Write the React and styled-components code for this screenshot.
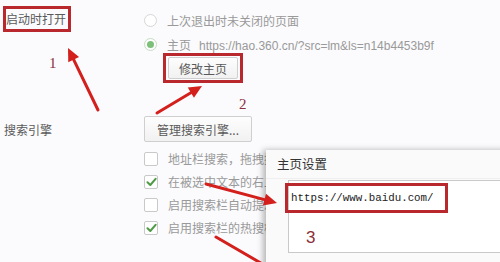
import React from 'react';
import styled, { createGlobalStyle } from 'styled-components';

const GlobalStyle = createGlobalStyle`
  html, body {
    margin: 0;
    padding: 0;
    background: #fbfbfd;
  }
  body {
    font-family: "Noto Sans CJK SC", "Noto Sans", sans-serif;
  }
`;

const Page = styled.div`
  position: relative;
  width: 500px;
  height: 262px;
  overflow: hidden;
  background: #fbfbfd;
`;

const Section = styled.div`
  display: flex;
  margin-top: ${p => p.top || 0}px;
`;

const LabelCell = styled.div`
  width: ${p => p.boxed ? 141 : 140}px;
  padding-left: ${p => p.boxed ? 3 : 4}px;
  flex-shrink: 0;
`;

const Label = styled.div`
  display: inline-block;
  font-size: 12px;
  color: #5a5a5a;
  line-height: ${p => p.boxed ? 20 : 26}px;
  height: ${p => p.boxed ? 20 : 26}px;
  padding-right: ${p => p.boxed ? 2 : 0}px;
  border: ${p => p.boxed ? '3px solid #b8282c' : 'none'};
  margin-top: ${p => p.boxed ? 6 : 0}px;
  white-space: nowrap;
`;

const Options = styled.div`
  display: flex;
  flex-direction: column;
  padding-top: ${p => p.top || 0}px;
  min-width: 0;
`;

const Row = styled.div`
  display: flex;
  align-items: center;
  height: ${p => p.h || 24}px;
  gap: 10px;
  white-space: nowrap;
  font-size: 12px;
  color: #999;
`;

const Clipped = styled.span`
  display: block;
  width: 98px;
  overflow: hidden;
`;

const Radio = styled.span`
  box-sizing: border-box;
  width: 13px;
  height: 13px;
  border-radius: 50%;
  border: 1px solid ${p => p.checked ? '#c5dcc4' : '#d6d6d6'};
  background: #fff;
  display: flex;
  align-items: center;
  justify-content: center;
  &::after {
    content: '';
    width: 7px;
    height: 7px;
    border-radius: 50%;
    background: ${p => p.checked ? '#7cc07a' : 'transparent'};
  }
`;

const Url = styled.span`
  margin-left: 8px;
  font-family: "Liberation Sans", Arial, sans-serif;
  font-size: 12px;
  color: #999;
`;

const RedBox = styled.div`
  box-sizing: border-box;
  border: 3px solid #b8282c;
  padding: 1px 2px;
`;

const ButtonBox = styled(RedBox)`
  width: 80px;
  height: 30px;
  margin: -3px 0 0 19px;
`;

const Button = styled.div`
  box-sizing: border-box;
  height: ${p => p.h || 22}px;
  width: ${p => p.w ? p.w + 'px' : '100%'};
  border: 1px solid #cfcfcf;
  border-radius: 2px;
  background: linear-gradient(#fdfdfd, #f1f1f1);
  font-size: 12px;
  color: #5a5a5a;
  display: flex;
  align-items: center;
  justify-content: center;
  white-space: nowrap;
`;

const CheckList = styled.div`
  margin-top: 5px;
  display: flex;
  flex-direction: column;
`;

const Checkbox = styled.span`
  box-sizing: border-box;
  width: 14px;
  height: 14px;
  border: 1px solid #c9c9c9;
  border-radius: 2px;
  background: #fff;
  display: flex;
  align-items: center;
  justify-content: center;
  color: #4f9a45;
  flex-shrink: 0;
`;

const Dialog = styled.div`
  position: absolute;
  left: 266px;
  top: 150px;
  width: 260px;
  height: 130px;
  background: #fafafa;
  box-shadow: -3px 0 6px rgba(0, 0, 0, 0.28);
  display: flex;
  flex-direction: column;
`;

const DialogTitle = styled.div`
  height: 28px;
  line-height: 27px;
  padding-left: 11px;
  font-size: 12.5px;
  color: #333;
  border-bottom: 1px solid #efefef;
`;

const DialogBody = styled.div`
  padding: 1px 0 0 22px;
`;

const Input = styled.div`
  box-sizing: border-box;
  height: 73px;
  border: 1px solid #c9c9c9;
  border-right: none;
  background: #fff;
  padding-top: 2px;
`;

const UrlBox = styled(RedBox)`
  width: 163px;
  height: 30px;
  margin-left: -4px;
  padding: 0 0 0 3px;
  display: flex;
  align-items: center;
  font-family: "Liberation Mono", "DejaVu Sans Mono", monospace;
  font-size: 10.8px;
  color: #222;
`;

const Note = styled.span`
  position: absolute;
  left: ${p => p.x}px;
  top: ${p => p.y}px;
  font-family: ${p => p.sans ? '"Liberation Sans", Arial, sans-serif' : '"Liberation Serif", "Times New Roman", serif'};
  font-size: ${p => p.size || 15}px;
  line-height: 1;
  color: #8a2f3c;
`;

const Overlay = styled.svg`
  position: absolute;
  left: 0;
  top: 0;
  pointer-events: none;
`;

const Check = () => (
  <svg width="11" height="10" viewBox="0 0 11 10">
    <path d="M1.5 5.2 L4.3 8 L9.6 1.8" fill="none" stroke="currentColor" strokeWidth="2" strokeLinecap="round" strokeLinejoin="round" />
  </svg>
);

const Arrow = ({ x1, y1, x2, y2 }) => {
  const a = Math.atan2(y2 - y1, x2 - x1);
  const len = 13;
  const w = 6;
  const bx = x2 - len * Math.cos(a);
  const by = y2 - len * Math.sin(a);
  const px = -Math.sin(a) * w;
  const py = Math.cos(a) * w;
  return (
    <g>
      <line x1={x1} y1={y1} x2={bx} y2={by} stroke="#d3201d" strokeWidth="3" strokeLinecap="round" />
      <polygon points={`${x2},${y2} ${bx + px},${by + py} ${bx - px},${by - py}`} fill="#d3201d" />
    </g>
  );
};

const searchOptions = [
  { text: '地址栏搜索，拖拽搜索时使用新标签打开', checked: false },
  { text: '在被选中文本的右上角显示搜索按钮', checked: true },
  { text: '启用搜索栏自动提示', checked: false },
  { text: '启用搜索栏的热搜榜', checked: true },
];

export default function App() {
  return (
    <>
      <GlobalStyle />
      <Page>
        <Section>
          <LabelCell boxed>
            <Label boxed>启动时打开</Label>
          </LabelCell>
          <Options top={8}>
            <Row>
              <Radio />
              <span>上次退出时未关闭的页面</span>
            </Row>
            <Row>
              <Radio checked />
              <span>主页<Url>https://hao.360.cn/?src=lm&amp;ls=n14b4453b9f</Url></span>
            </Row>
            <ButtonBox>
              <Button>修改主页</Button>
            </ButtonBox>
          </Options>
        </Section>

        <Section top={33}>
          <LabelCell>
            <Label>搜索引擎</Label>
          </LabelCell>
          <Options>
            <Button h={26} w={108}>管理搜索引擎...</Button>
            <CheckList>
              {searchOptions.map(o => (
                <Row key={o.text} h={23}>
                  <Checkbox>{o.checked && <Check />}</Checkbox>
                  <Clipped>{o.text}</Clipped>
                </Row>
              ))}
            </CheckList>
          </Options>
        </Section>

        <Dialog>
          <DialogTitle>主页设置</DialogTitle>
          <DialogBody>
            <Input>
              <UrlBox>https://www.baidu.com/</UrlBox>
            </Input>
          </DialogBody>
        </Dialog>

        <Overlay width="500" height="262" viewBox="0 0 500 262">
          <Arrow x1={98} y1={110} x2={68} y2={48} />
          <Arrow x1={157} y1={113} x2={202} y2={86} />
          <Arrow x1={206} y1={184} x2={277} y2={203} />
          <line x1={216} y1={237} x2={290} y2={280} stroke="#d3201d" strokeWidth="3" strokeLinecap="round" />
        </Overlay>

        <Note x={49} y={56}>1</Note>
        <Note x={239} y={97}>2</Note>
        <Note x={306} y={229} sans size={17}>3</Note>
      </Page>
    </>
  );
}
